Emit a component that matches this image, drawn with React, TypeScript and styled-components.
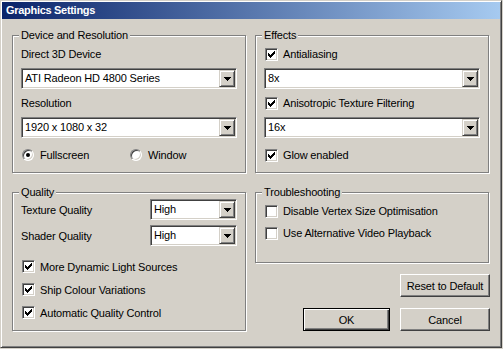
import React from 'react';
import styled, { createGlobalStyle } from 'styled-components';

const GlobalStyle = createGlobalStyle`
  html, body {
    margin: 0;
    padding: 0;
    background: #d4d0c8;
  }
  body {
    font-family: "Liberation Sans", Arial, sans-serif;
    font-size: 11px;
    letter-spacing: -0.15px;
    color: #000;
  }
`;

export default function App() {
  return (
    <>
      <GlobalStyle />
      <Window>
        <TitleBar>Graphics Settings</TitleBar>
        <Body>
          <Group $pb={10}>
            <Caption>Device and Resolution</Caption>
            <FieldLabel>Direct 3D Device</FieldLabel>
            <Combo value="ATI Radeon HD 4800 Series" />
            <FieldLabel>Resolution</FieldLabel>
            <Combo value="1920 x 1080 x 32" />
            <RadioRow>
              <Radio label="Fullscreen" checked />
              <Radio label="Window" />
            </RadioRow>
          </Group>

          <Group $pb={10}>
            <Caption>Effects</Caption>
            <CheckBox label="Antialiasing" checked $mt={5} />
            <Combo value="8x" />
            <CheckBox label="Anisotropic Texture Filtering" checked $mt={7} />
            <Combo value="16x" />
            <CheckBox label="Glow enabled" checked $mt={10} />
          </Group>

          <Group $pb={6}>
            <Caption>Quality</Caption>
            <SettingRow>
              <span>Texture Quality</span>
              <Combo value="High" $width={87} $mt={0} />
            </SettingRow>
            <SettingRow $mt={5}>
              <span>Shader Quality</span>
              <Combo value="High" $width={87} $mt={0} />
            </SettingRow>
            <CheckList $mt={9}>
              <CheckBox label="More Dynamic Light Sources" checked $h={23} />
              <CheckBox label="Ship Colour Variations" checked $h={23} />
              <CheckBox label="Automatic Quality Control" checked $h={23} />
            </CheckList>
          </Group>

          <RightStack>
            <Group $pb={18}>
              <Caption>Troubleshooting</Caption>
              <CheckList $mt={1}>
                <CheckBox label="Disable Vertex Size Optimisation" $h={22} />
                <CheckBox label="Use Alternative Video Playback" $h={22} />
              </CheckList>
            </Group>
            <ButtonRow>
              <Button $width={90}>Reset to Default</Button>
            </ButtonRow>
            <ButtonRow>
              <Button $width={87} $isDefault>OK</Button>
              <Button $width={90}>Cancel</Button>
            </ButtonRow>
          </RightStack>
        </Body>
      </Window>
    </>
  );
}

function Combo({ value, $width, $mt = 7 }: { value: string; $width?: number; $mt?: number }) {
  return (
    <ComboBox $width={$width} $mt={$mt}>
      <ComboText>{value}</ComboText>
      <DropButton>
        <svg width="7" height="4" viewBox="0 0 7 4" shapeRendering="crispEdges">
          <rect x="0" y="0" width="7" height="1" fill="#000" />
          <rect x="1" y="1" width="5" height="1" fill="#000" />
          <rect x="2" y="2" width="3" height="1" fill="#000" />
          <rect x="3" y="3" width="1" height="1" fill="#000" />
        </svg>
      </DropButton>
    </ComboBox>
  );
}

function CheckBox({ label, checked, $mt = 0, $h = 14 }: { label: string; checked?: boolean; $mt?: number; $h?: number }) {
  return (
    <CheckRow $mt={$mt} $h={$h}>
      <Box>
        {checked && (
          <svg width="7" height="7" viewBox="0 0 7 7" shapeRendering="crispEdges">
            <rect x="6" y="0" width="1" height="3" fill="#000" />
            <rect x="5" y="1" width="1" height="3" fill="#000" />
            <rect x="4" y="2" width="1" height="3" fill="#000" />
            <rect x="3" y="3" width="1" height="3" fill="#000" />
            <rect x="2" y="4" width="1" height="3" fill="#000" />
            <rect x="1" y="3" width="1" height="3" fill="#000" />
            <rect x="0" y="2" width="1" height="3" fill="#000" />
          </svg>
        )}
      </Box>
      <span>{label}</span>
    </CheckRow>
  );
}

function Radio({ label, checked }: { label: string; checked?: boolean }) {
  return (
    <RadioItem>
      <RadioCircle>{checked && <RadioDot />}</RadioCircle>
      <span>{label}</span>
    </RadioItem>
  );
}

const Window = styled.div`
  box-sizing: border-box;
  width: 502px;
  height: 348px;
  padding: 1px;
  border: 1px solid;
  border-color: #d4d0c8 #404040 #404040 #d4d0c8;
  box-shadow: inset 1px 1px #fff, inset -1px -1px #808080;
  background: #d4d0c8;
`;

const TitleBar = styled.div`
  height: 17px;
  line-height: 17px;
  padding-left: 4px;
  font-weight: bold;
  color: #fff;
  letter-spacing: -0.3px;
  background: linear-gradient(to right, #0a246a, #a6caf0);
`;

const Body = styled.div`
  display: grid;
  grid-template-columns: 234px 234px;
  column-gap: 9px;
  row-gap: 19px;
  align-items: start;
  padding: 16px 0 0 10px;
`;

const Group = styled.div<{ $pb: number }>`
  display: flex;
  flex-direction: column;
  border: 1px solid #808080;
  box-shadow: inset 1px 1px #fff, 1px 1px #fff;
  padding: 0 8px ${(p) => p.$pb}px;
`;

const Caption = styled.div`
  width: fit-content;
  margin: -7px 0 0 -2px;
  padding: 0 2px;
  line-height: 13px;
  background: #d4d0c8;
`;

const FieldLabel = styled.div`
  line-height: 14px;
  margin-top: 5px;
  & + div + & {
    margin-top: 7px;
  }
`;

const ComboBox = styled.div<{ $width?: number; $mt: number }>`
  box-sizing: border-box;
  display: flex;
  align-items: center;
  width: ${(p) => (p.$width ? `${p.$width}px` : '100%')};
  height: 21px;
  margin-top: ${(p) => p.$mt}px;
  border: 1px solid;
  border-color: #808080 #fff #fff #808080;
  box-shadow: inset 1px 1px #404040, inset -1px -1px #d4d0c8;
  padding: 1px;
  background: #fff;
`;

const ComboText = styled.div`
  flex: 1;
  padding-left: 2px;
  line-height: 17px;
  white-space: nowrap;
  overflow: hidden;
`;

const DropButton = styled.div`
  box-sizing: border-box;
  display: flex;
  align-items: center;
  justify-content: center;
  width: 16px;
  height: 17px;
  border: 1px solid;
  border-color: #d4d0c8 #404040 #404040 #d4d0c8;
  box-shadow: inset 1px 1px #fff, inset -1px -1px #808080;
  background: #d4d0c8;
  padding-top: 1px;
`;

const RadioRow = styled.div`
  display: grid;
  grid-template-columns: 108px auto;
  margin-top: 10px;
  padding-left: 1px;
`;

const RadioItem = styled.div`
  display: flex;
  align-items: center;
  gap: 6px;
  height: 14px;
`;

const RadioCircle = styled.div`
  box-sizing: border-box;
  display: flex;
  align-items: center;
  justify-content: center;
  width: 12px;
  height: 12px;
  border-radius: 50%;
  border: 1px solid;
  border-color: #808080 #fff #fff #808080;
  box-shadow: inset 1px 1px #404040, inset -1px -1px #d4d0c8;
  background: #fff;
`;

const RadioDot = styled.div`
  width: 4px;
  height: 4px;
  border-radius: 50%;
  background: #000;
`;

const CheckList = styled.div<{ $mt: number }>`
  display: flex;
  flex-direction: column;
  margin-top: ${(p) => p.$mt}px;
`;

const CheckRow = styled.div<{ $mt: number; $h: number }>`
  display: flex;
  align-items: center;
  gap: 5px;
  height: ${(p) => p.$h}px;
  margin-top: ${(p) => p.$mt}px;
  padding-left: 1px;
`;

const Box = styled.div`
  box-sizing: border-box;
  display: flex;
  align-items: center;
  justify-content: center;
  width: 13px;
  height: 13px;
  border: 1px solid;
  border-color: #808080 #fff #fff #808080;
  box-shadow: inset 1px 1px #404040, inset -1px -1px #d4d0c8;
  background: #fff;
`;

const SettingRow = styled.div<{ $mt?: number }>`
  display: flex;
  align-items: center;
  justify-content: space-between;
  margin-top: ${(p) => p.$mt ?? 0}px;
`;

const RightStack = styled.div`
  display: flex;
  flex-direction: column;
`;

const ButtonRow = styled.div`
  display: flex;
  justify-content: flex-end;
  gap: 10px;
  margin: 11px -1px 0 0;
`;

const Button = styled.button<{ $width: number; $isDefault?: boolean }>`
  box-sizing: border-box;
  width: ${(p) => p.$width}px;
  height: 23px;
  padding: 0;
  font: inherit;
  letter-spacing: inherit;
  color: #000;
  background: #d4d0c8;
  border: 1px solid;
  border-color: ${(p) => (p.$isDefault ? '#000' : '#fff #404040 #404040 #fff')};
  box-shadow: ${(p) =>
    p.$isDefault
      ? 'inset 1px 1px #fff, inset -1px -1px #404040, inset -2px -2px #808080'
      : 'inset -1px -1px #808080'};
`;
